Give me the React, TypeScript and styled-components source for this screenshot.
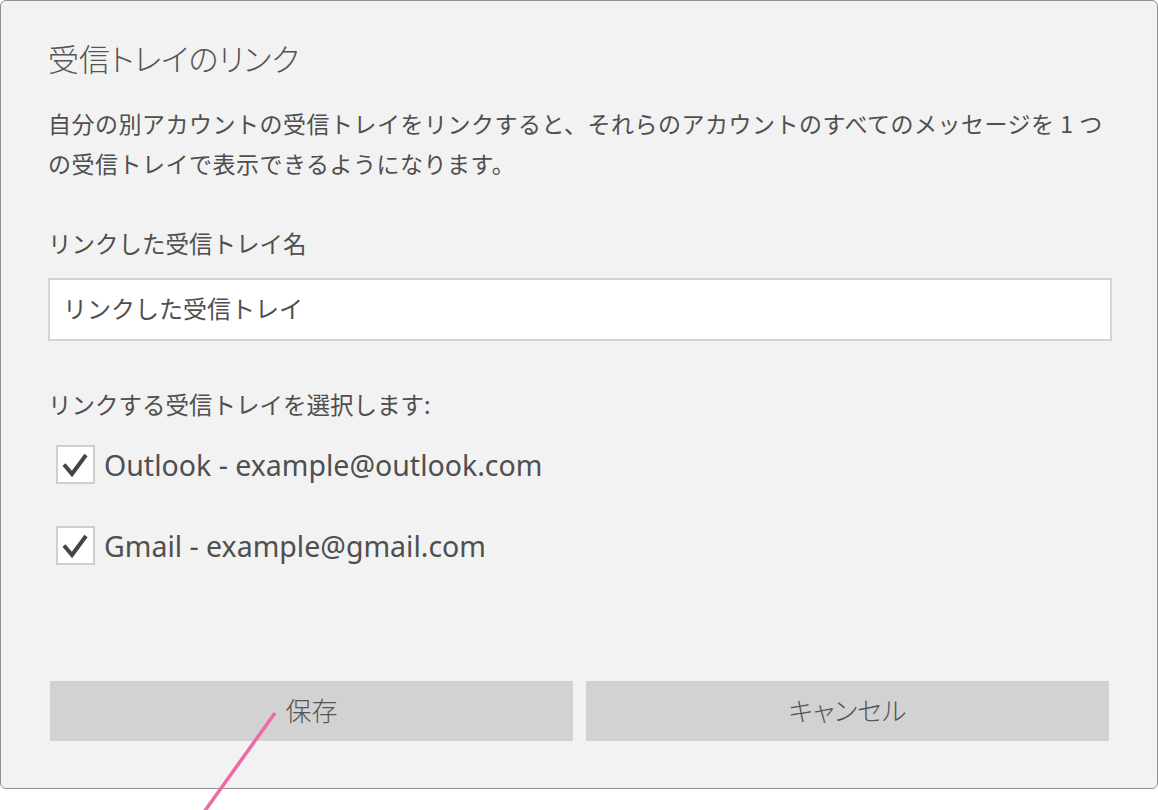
import styled, { createGlobalStyle } from "styled-components";

const GlobalStyle = createGlobalStyle`
  html, body {
    margin: 0;
    padding: 0;
    background: #ffffff;
  }
  * {
    box-sizing: border-box;
  }
`;

const jp = `"Noto Sans CJK JP", "Noto Sans", sans-serif`;

type Account = {
  id: string;
  label: string;
  checked: boolean;
};

const accounts: Account[] = [
  { id: "outlook", label: "Outlook - example@outlook.com", checked: true },
  { id: "gmail", label: "Gmail - example@gmail.com", checked: true },
];

const CheckIcon = () => (
  <svg width="39" height="39" viewBox="0 0 39 39">
    <polyline
      points="8,19.5 16,29 30,10"
      fill="none"
      stroke="#454545"
      strokeWidth="4"
      strokeLinejoin="miter"
    />
  </svg>
);

const App = () => {
  return (
    <Page>
      <GlobalStyle />
      <Dialog>
        <Title>受信トレイのリンク</Title>
        <Description>
          自分の別アカウントの受信トレイをリンクすると、それらのアカウントのすべてのメッセージを 1 つ
          <br />
          の受信トレイで表示できるようになります。
        </Description>
        <Label>リンクした受信トレイ名</Label>
        <NameInput defaultValue="リンクした受信トレイ" />
        <Label $top={47}>リンクする受信トレイを選択します:</Label>
        <AccountList>
          {accounts.map((a) => (
            <AccountRow key={a.id}>
              <Box>{a.checked ? <CheckIcon /> : null}</Box>
              <AccountText>{a.label}</AccountText>
            </AccountRow>
          ))}
        </AccountList>
        <ButtonRow>
          <Button>保存</Button>
          <Button>キャンセル</Button>
        </ButtonRow>
      </Dialog>
      <Pointer width="1158" height="810" viewBox="0 0 1158 810">
        <line x1="275" y1="713" x2="204" y2="812" stroke="#ee6aa6" strokeWidth="3.5" />
      </Pointer>
    </Page>
  );
};

export default App;

const Page = styled.div`
  position: relative;
  width: 1158px;
  height: 810px;
  overflow: hidden;
`;

const Dialog = styled.div`
  width: 1158px;
  height: 789px;
  background: #f2f2f2;
  border: 1px solid #909090;
  border-radius: 6px;
  padding: 37px 45px 0 47px;
  display: flex;
  flex-direction: column;
  font-family: ${jp};
  color: #4f4f4f;
`;

const Title = styled.h1`
  margin: 0;
  font-size: 31px;
  line-height: 40px;
  font-weight: 300;
  color: #555555;
  font-feature-settings: "palt";
`;

const Description = styled.p`
  margin: 25px 0 0;
  font-size: 23px;
  line-height: 40px;
  font-weight: 400;
  letter-spacing: 0.5px;
  white-space: nowrap;
`;

const Label = styled.div<{ $top?: number }>`
  margin-top: ${({ $top }) => $top ?? 44}px;
  font-size: 23.5px;
  line-height: 32px;
`;

const NameInput = styled.input`
  margin-top: 19px;
  width: 100%;
  height: 63px;
  border: 2px solid #d3d3d3;
  background: #ffffff;
  padding: 0 13px 4px;
  font-family: ${jp};
  font-size: 24px;
  color: #4f4f4f;
  outline: none;
`;

const AccountList = styled.div`
  margin-top: 25px;
  padding-left: 8px;
  display: flex;
  flex-direction: column;
  gap: 42px;
`;

const AccountRow = styled.label`
  display: flex;
  align-items: center;
  gap: 9px;
  height: 39px;
`;

const Box = styled.span`
  width: 39px;
  height: 39px;
  flex: none;
  background: #ffffff;
  border: 2px solid #cfcfcf;
  display: flex;
  align-items: center;
  justify-content: center;
  svg {
    flex: none;
  }
`;

const AccountText = styled.span`
  font-family: "Noto Sans", "Noto Sans CJK JP", sans-serif;
  font-size: 28.5px;
  color: #4f4f4f;
  white-space: nowrap;
`;

const ButtonRow = styled.div`
  margin-top: auto;
  margin-bottom: 47px;
  padding: 0 3px 0 2px;
  display: grid;
  grid-template-columns: 1fr 1fr;
  gap: 13px;
`;

const Button = styled.button`
  height: 60px;
  border: none;
  background: #d2d2d2;
  font-family: ${jp};
  font-feature-settings: "palt";
  font-size: 26px;
  font-weight: 300;
  color: #555555;
  padding: 0 0 4px;
  cursor: pointer;
`;

const Pointer = styled.svg`
  position: absolute;
  left: 0;
  top: 0;
  pointer-events: none;
`;
